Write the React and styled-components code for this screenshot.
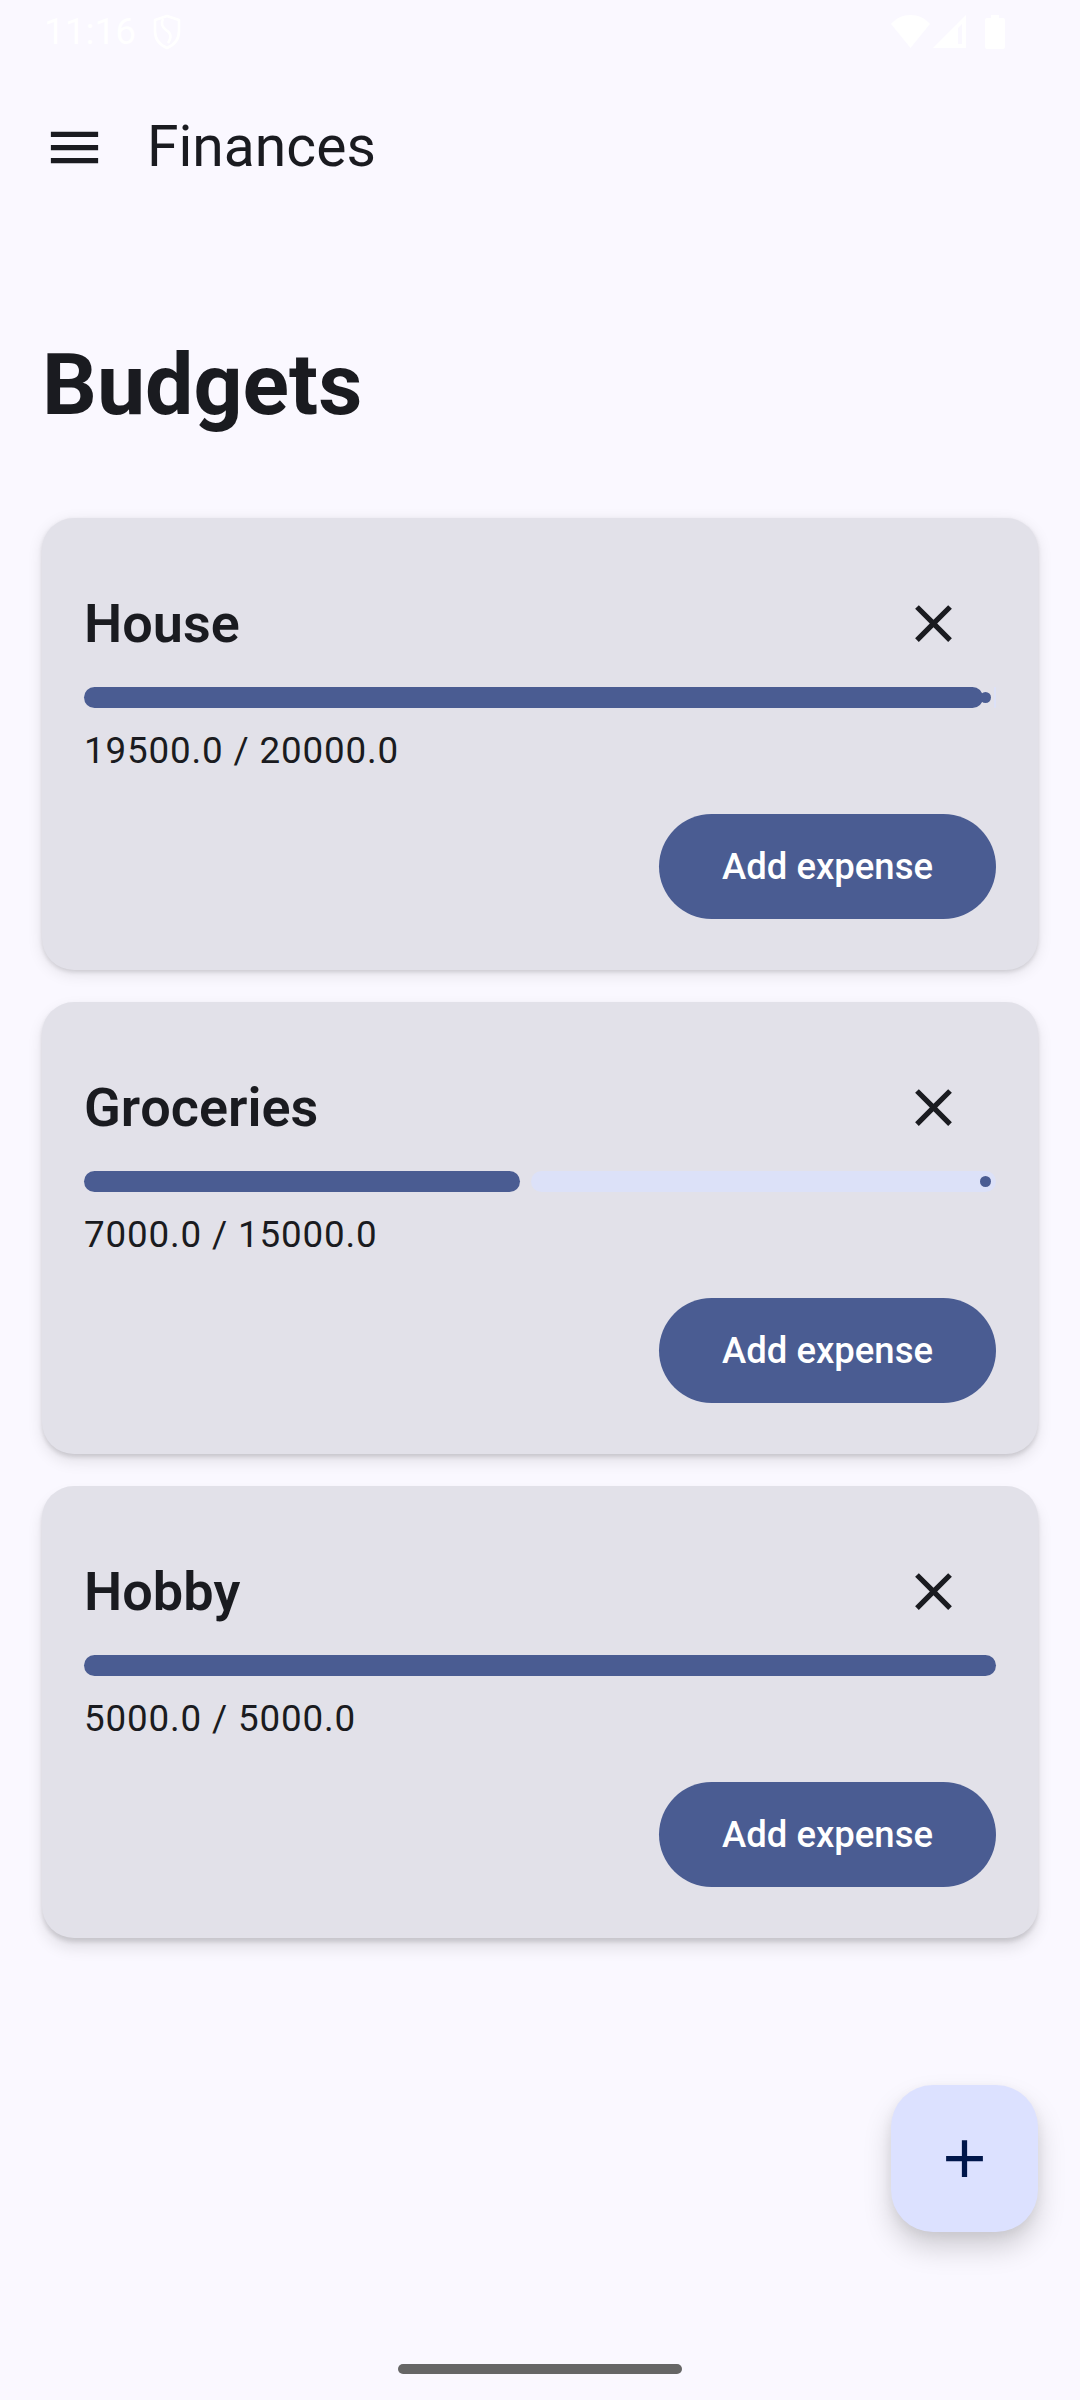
import React from 'react';
import styled, { createGlobalStyle } from 'styled-components';

const GlobalStyle = createGlobalStyle`
  html, body {
    margin: 0;
    padding: 0;
    background: #faf8ff;
  }
  * {
    box-sizing: border-box;
  }
`;

const Page = styled.div`
  position: relative;
  width: 1080px;
  height: 2400px;
  overflow: hidden;
  display: flex;
  flex-direction: column;
  background: #faf8ff;
  color: #1a1b20;
  font-family: Roboto, sans-serif;
`;

const StatusBar = styled.div`
  height: 63px;
  padding: 0 75px 0 44px;
  display: flex;
  align-items: center;
  justify-content: space-between;
  color: #ffffff;
`;

const StatusLeft = styled.div`
  display: flex;
  align-items: center;
  gap: 16px;
`;

const StatusTime = styled.span`
  font-size: 37px;
  line-height: 63px;
`;

const StatusRight = styled.div`
  display: flex;
  align-items: center;
`;

const TopBar = styled.header`
  height: 168px;
  padding: 0 0 0 43px;
  display: flex;
  align-items: center;
  gap: 41px;
`;

const TopTitle = styled.h1`
  margin: 0;
  font-size: 57px;
  font-weight: 400;
  line-height: 74px;
`;

const Heading = styled.h2`
  margin: 101px 0 0;
  padding: 0 42px;
  font-size: 86px;
  font-weight: 700;
  line-height: 105px;
`;

const CardList = styled.div`
  margin-top: 81px;
  padding: 0 42px;
  display: flex;
  flex-direction: column;
  gap: 32px;
`;

// cards lower on the screen throw a longer shadow
const Card = styled.section`
  height: 452px;
  padding: 42px;
  border-radius: 32px;
  background: #e2e1e9;
  box-shadow: 0 ${(p) => 2 + p.$depth}px 4px rgba(0, 0, 0, 0.12),
    0 ${(p) => 4 + p.$depth * 3}px 15px rgba(0, 0, 0, 0.1);
`;

const CardHeader = styled.div`
  height: 127px;
  display: flex;
  align-items: center;
  justify-content: space-between;
`;

const CardTitle = styled.h3`
  margin: 0;
  font-size: 54px;
  font-weight: 600;
  font-kerning: none;
`;

const CloseButton = styled.button`
  width: 126px;
  height: 126px;
  padding: 0;
  border: 0;
  background: none;
  color: #1a1b20;
  display: flex;
  align-items: center;
  justify-content: center;
`;

const Track = styled.div`
  position: relative;
  height: 21px;
  display: flex;
  gap: 11px;
`;

const Fill = styled.div`
  height: 100%;
  border-radius: 10.5px;
  background: #4a5c92;
`;

const Rest = styled.div`
  flex: 1;
  height: 100%;
  border-radius: 10.5px;
  background: #dce1f8;
`;

const StopDot = styled.span`
  position: absolute;
  top: 5px;
  right: 5px;
  width: 11px;
  height: 11px;
  border-radius: 50%;
  background: #4a5c92;
`;

const Amount = styled.p`
  margin: 11px 0 0;
  font-size: 36.75px;
  line-height: 63px;
  letter-spacing: 0.85px;
  color: #1a1b20;
`;

const CardFooter = styled.div`
  margin-top: 32px;
  display: flex;
  justify-content: flex-end;
`;

const AddButton = styled.button`
  width: 337px;
  height: 105px;
  border: 0;
  border-radius: 52.5px;
  background: #4a5c92;
  color: #ffffff;
  font-family: inherit;
  font-size: 36.5px;
  font-weight: 500;
`;

const Fab = styled.button`
  position: absolute;
  left: 891px;
  top: 2085px;
  width: 147px;
  height: 147px;
  padding: 0;
  border: 0;
  border-radius: 42px;
  background: #dce1ff;
  color: #00164a;
  display: flex;
  align-items: center;
  justify-content: center;
  box-shadow: 0 16px 28px rgba(0, 0, 0, 0.17), 0 4px 12px rgba(0, 0, 0, 0.06);
`;

const NavHandle = styled.div`
  position: absolute;
  left: 398px;
  top: 2364px;
  width: 284px;
  height: 10px;
  border-radius: 5px;
  background: #666666;
`;

const SignalSlot = styled.span`
  display: flex;
  margin: 0 19px 0 3px;
`;

const MenuIcon = () => (
  <svg width="63" height="63" viewBox="0 0 24 24" fill="currentColor">
    <path d="M3 18h18v-2H3v2zm0-5h18v-2H3v2zm0-7v2h18V6H3z" />
  </svg>
);

const CloseIcon = () => (
  <svg width="63" height="63" viewBox="0 0 24 24" fill="currentColor">
    <path d="M19 6.41 17.59 5 12 10.59 6.41 5 5 6.41 10.59 12 5 17.59 6.41 19 12 13.41 17.59 19 19 17.59 13.41 12z" />
  </svg>
);

const AddIcon = () => (
  <svg width="63" height="63" viewBox="0 0 24 24" fill="currentColor">
    <path d="M19 13h-6v6h-2v-6H5v-2h6V5h2v6h6v2z" />
  </svg>
);

const ShieldIcon = () => (
  <svg width="30" height="36" viewBox="0 0 30 36" fill="none" stroke="currentColor" strokeWidth="2.6" strokeLinejoin="round">
    <path d="M15 2 3 6v11c0 8 5 14 12 17 7-3 12-9 12-17V6z" />
    <path d="M11 5c-2 4-1 8 3 11 5 3 6 7 2 13" />
  </svg>
);

const WifiIcon = () => (
  <svg width="39" height="33" viewBox="0 0 39 33" fill="currentColor">
    <path d="M19.5 33 0 9C5 3 12 0 19.5 0S34 3 39 9z" />
  </svg>
);

const SignalIcon = () => (
  <svg width="33" height="33" viewBox="0 0 33 33" fill="currentColor">
    <path fillRule="evenodd" d="M33 0v33H0zM29 9l-4 4v16h4z" />
  </svg>
);

const BatteryIcon = () => (
  <svg width="20" height="34" viewBox="0 0 20 34" fill="currentColor">
    <path d="M6 0h8v3h4a2 2 0 0 1 2 2v27a2 2 0 0 1-2 2H2a2 2 0 0 1-2-2V5a2 2 0 0 1 2-2h4z" />
  </svg>
);

const budgets = [
  { name: 'House', spent: 19500, total: 20000, fill: 899 },
  { name: 'Groceries', spent: 7000, total: 15000, fill: 436 },
  { name: 'Hobby', spent: 5000, total: 5000, fill: 912 },
];

const BudgetCard = ({ budget, depth }) => {
  const { name, spent, total, fill } = budget;
  const isFull = spent >= total;

  return (
    <Card $depth={depth}>
      <CardHeader>
        <CardTitle>{name}</CardTitle>
        <CloseButton aria-label="Delete budget">
          <CloseIcon />
        </CloseButton>
      </CardHeader>
      <Track>
        <Fill style={{ width: fill }} />
        {!isFull && <Rest />}
        {!isFull && <StopDot />}
      </Track>
      <Amount>{`${spent.toFixed(1)} / ${total.toFixed(1)}`}</Amount>
      <CardFooter>
        <AddButton>Add expense</AddButton>
      </CardFooter>
    </Card>
  );
};

const App = () => (
  <Page>
    <GlobalStyle />
    <StatusBar>
      <StatusLeft>
        <StatusTime>11:16</StatusTime>
        <ShieldIcon />
      </StatusLeft>
      <StatusRight>
        <WifiIcon />
        <SignalSlot>
          <SignalIcon />
        </SignalSlot>
        <BatteryIcon />
      </StatusRight>
    </StatusBar>
    <TopBar>
      <MenuIcon />
      <TopTitle>Finances</TopTitle>
    </TopBar>
    <Heading>Budgets</Heading>
    <CardList>
      {budgets.map((budget, index) => (
        <BudgetCard key={budget.name} budget={budget} depth={index} />
      ))}
    </CardList>
    <Fab aria-label="Add budget">
      <AddIcon />
    </Fab>
    <NavHandle />
  </Page>
);

export default App;
